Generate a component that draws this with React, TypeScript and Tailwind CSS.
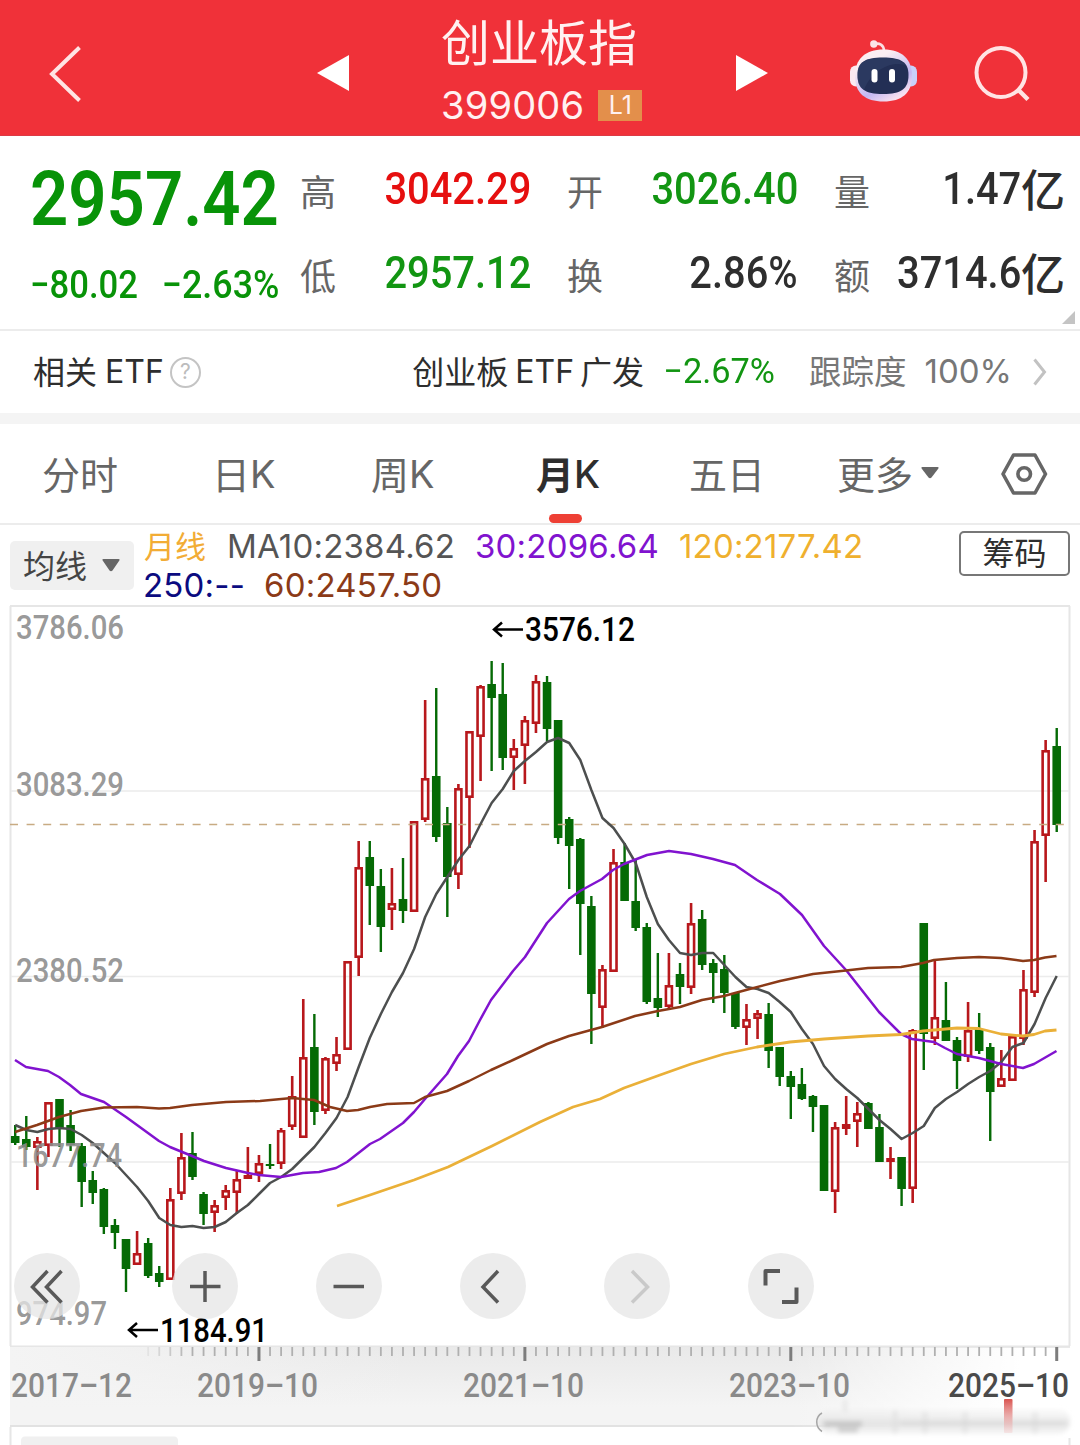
import type { ReactNode } from "react";

type Candle = [high: number, top: number, bottom: number, low: number, up: 0 | 1];

const RED = "#b8181c";
const GREEN = "#056a05";

const STEP = 11.08;
const X0 = 15.2;
const xAt = (i: number) => X0 + i * STEP;

/* Monthly candles, 2017-12 to 2025-10, in chart units */
const CANDLES: Candle[] = [
  [1125, 1136, 1143, 1145, 0], [1116, 1139, 1147, 1150, 0], [1137, 1141, 1148, 1190, 1], [1102, 1102, 1146, 1157, 1],
  [1099, 1099, 1129, 1147, 0], [1110, 1125, 1145, 1151, 0], [1143, 1146, 1182, 1207, 0], [1171, 1180, 1193, 1204, 0],
  [1188, 1189, 1227, 1234, 0], [1219, 1225, 1233, 1249, 0], [1239, 1239, 1269, 1292, 0], [1231, 1253, 1265, 1265, 1],
  [1238, 1243, 1276, 1278, 0], [1266, 1273, 1282, 1287, 0], [1188, 1199, 1280, 1280, 1], [1133, 1157, 1194, 1200, 1],
  [1132, 1153, 1177, 1180, 0], [1192, 1194, 1214, 1225, 0], [1200, 1205, 1213, 1232, 1], [1185, 1190, 1198, 1210, 1],
  [1171, 1179, 1193, 1214, 1], [1147, 1175, 1179, 1179, 1], [1155, 1163, 1174, 1182, 1], [1144, 1164, 1166, 1169, 0],
  [1128, 1130, 1164, 1169, 1], [1076, 1096, 1127, 1130, 1], [999, 1057, 1138, 1138, 1], [1014, 1047, 1112, 1125, 0],
  [1057, 1058, 1111, 1114, 1], [1037, 1054, 1064, 1071, 1], [961, 961, 1050, 1050, 1], [841, 867, 958, 976, 1],
  [841, 857, 886, 925, 0], [869, 886, 927, 952, 0], [868, 903, 910, 930, 1], [858, 899, 911, 923, 0],
  [821, 821, 912, 912, 1], [700, 778, 820, 822, 1], [688, 776, 837, 842, 0], [807, 823, 877, 917, 0],
  [784, 788, 875, 889, 1], [731, 731, 798, 848, 1], [685, 686, 737, 781, 1], [661, 684, 698, 771, 0],
  [663, 694, 758, 770, 0], [739, 748, 758, 790, 1], [716, 720, 746, 784, 1], [675, 681, 724, 733, 1],
  [676, 682, 729, 741, 0], [720, 720, 838, 844, 0], [817, 819, 846, 889, 0], [838, 839, 904, 955, 0],
  [896, 906, 994, 1044, 0], [965, 969, 1008, 1028, 1], [849, 862, 972, 972, 1], [843, 862, 901, 901, 0],
  [860, 901, 928, 931, 0], [923, 927, 1002, 1004, 0], [953, 998, 1008, 1017, 0], [953, 985, 1007, 1009, 1],
  [963, 974, 987, 1004, 0], [903, 923, 988, 994, 1], [910, 919, 965, 970, 0], [959, 963, 973, 1003, 0],
  [955, 969, 993, 1013, 0], [993, 993, 1027, 1029, 0], [1004, 1019, 1028, 1045, 1], [1010, 1013, 1019, 1039, 1],
  [1003, 1014, 1051, 1068, 0], [1047, 1047, 1077, 1086, 0], [1071, 1076, 1087, 1119, 0], [1068, 1084, 1099, 1100, 0],
  [1095, 1096, 1107, 1132, 0], [1105, 1105, 1191, 1191, 0], [1122, 1127, 1192, 1213, 1], [1096, 1124, 1129, 1135, 1],
  [1102, 1113, 1122, 1147, 1], [1102, 1103, 1129, 1129, 0], [1114, 1127, 1162, 1162, 0], [1147, 1158, 1162, 1179, 1],
  [1157, 1157, 1189, 1206, 0], [1029, 1030, 1189, 1203, 1], [923, 923, 1034, 1070, 0], [959, 1017, 1039, 1045, 1],
  [982, 1020, 1041, 1041, 0], [1037, 1040, 1061, 1089, 0], [1002, 1030, 1057, 1062, 1], [1013, 1029, 1051, 1054, 0],
  [1043, 1047, 1092, 1141, 0], [1050, 1078, 1087, 1087, 1], [1036, 1036, 1081, 1081, 1], [970, 989, 1039, 1045, 1],
  [830, 841, 993, 997, 1], [740, 750, 836, 882, 1], [728, 746, 825, 832, 0],
];

const MA10 = [
  1125, 1130, 1132, 1129, 1128, 1129, 1135, 1143, 1153, 1163, 1175, 1187, 1201, 1218, 1225, 1227, 1226, 1228, 1227,
  1222, 1213, 1205, 1194, 1183, 1177, 1169, 1158, 1147, 1133, 1118, 1097, 1067, 1038, 1014, 992, 973, 949, 917, 894,
  877, 860, 846, 824, 803, 789, 771, 761, 752, 742, 738, 743, 760, 790, 818, 828, 844, 863, 897, 924, 940, 953, 955,
  953, 953, 965, 977, 987, 989, 993, 1002, 1012, 1029, 1044, 1066, 1079, 1089, 1098, 1109, 1120, 1129, 1139, 1133,
  1126, 1108, 1099, 1092, 1084, 1077, 1071, 1062, 1047, 1043, 1024, 998, 976,
];

const MA30 =
  "15,1060 26,1067 48,1071 59,1077 70,1085 81,1094 104,1102 126,1117 148,1133 159,1141 170,1147 192,1156 204,1161 226,1168 248,1173 259,1175 281,1177 303,1173 319,1172 336,1168 347,1162 370,1144 380,1139 403,1123 414,1112 425,1099 447,1074 458,1056 469,1041 480,1020 491,1000 513,971 525,957 536,940 547,923 558,911 569,899 580,891 602,879 613,870 624,864 647,855 669,851 691,854 713,859 735,865 757,880 780,894 802,915 824,946 846,970 857,984 868,998 879,1012 901,1034 912,1039 934,1042 945,1048 957,1054 979,1058 1001,1064 1023,1068 1034,1064 1056.5,1051";
const MA60 =
  "15,1132 37,1125 59,1117 81,1111 104,1107.5 137,1107 159,1108.5 170,1108 192,1105 226,1102 260,1101 292,1098 314,1100 330,1107 347,1111 358,1110 370,1107 387,1104 414,1103 425,1097 447,1091 469,1081 491,1070 513,1060 547,1044 569,1036 580,1033 602,1027 635,1016 658,1011 680,1007 702,1000 724,996 746,990 780,981 813,974 846,970.5 868,968 901,967 923,963 934,960 957,958 979,957 1001,958 1023,961 1034,960 1045,957.5 1056.5,956";
const MA120 =
  "337,1206 370,1195 414,1180 448,1167 492,1146 540,1122 573,1107 600,1099 624,1088 660,1075 691,1064 724,1054 757,1047 790,1042 824,1039 868,1036 901,1034.5 923,1031 957,1028 979,1028.5 1001,1034 1023,1036 1034,1034.5 1045,1031 1056.5,1030";

const Y_LABELS = [
  { text: "3786.06", y: 638.5, w: 108 },
  { text: "3083.29", y: 795.5, w: 108 },
  { text: "2380.52", y: 981.5, w: 108 },
  { text: "1677.74", y: 1166.5, w: 106 },
  { text: "974.97", y: 1324.5, w: 91 },
];

const X_LABELS = [
  { text: "2017–12", x: 11, fill: "#8a8a8a" },
  { text: "2019–10", x: 197, fill: "#8a8a8a" },
  { text: "2021–10", x: 463, fill: "#8a8a8a" },
  { text: "2023–10", x: 729, fill: "#8a8a8a" },
  { text: "2025–10", x: 948, fill: "#4a4a4a" },
];

const QUOTES = [
  [
    { label: "高", value: "3042.29", color: "text-[#e60f0f]" },
    { label: "低", value: "2957.12", color: "text-[#129512]" },
  ],
  [
    { label: "开", value: "3026.40", color: "text-[#129512]" },
    { label: "换", value: "2.86%", color: "text-[#2e2e2e]" },
  ],
  [
    { label: "量", value: "1.47", unit: "亿", color: "text-[#2e2e2e]" },
    { label: "额", value: "3714.6", unit: "亿", color: "text-[#2e2e2e]" },
  ],
];

function Robot() {
  return (
    <svg width="70" height="66" viewBox="848 40 70 66" fill="none">
      <defs>
        <linearGradient id="shell" x1="0" y1="0" x2="0.6" y2="1">
          <stop offset="0.3" stopColor="#fbeef3" />
          <stop offset="0.75" stopColor="#c3b7f2" />
          <stop offset="1" stopColor="#f6dff0" />
        </linearGradient>
      </defs>
      <path d="M874 45.500C879 43 884 46 884 52" stroke="#fbdfe3" strokeWidth="2.600" />
      <circle cx="873.800" cy="45" r="3.700" fill="#fbe3e7" />
      <rect x="850" y="66.500" width="12" height="21" rx="6" fill="#fbe9f0" />
      <rect x="905" y="66.500" width="12" height="21" rx="6" fill="#c9d0fa" />
      <path d="M883.500 50.500C902 50.500 912 60 912 77C912 94 902 102.500 883.500 102.500C865 102.500 855 94 855 77C855 60 865 50.500 883.500 50.500Z" fill="url(#shell)" />
      <path d="M883 58.500C901 58.500 908.500 63 908.500 76C908.500 90 901 95 883 95C865 95 857.500 90 857.500 76C857.500 63 865 58.500 883 58.500Z" fill="#232f55" />
      <path d="M883 59C896 59 903 61.500 906 67C898 62 874 66 864 91C859 88 857.500 83 857.500 76C857.500 63 865 59 883 59Z" fill="#33436c" opacity="0.5" />
      <rect x="871.500" y="70" width="6" height="13.500" rx="3" fill="#fff" />
      <rect x="889" y="70" width="6" height="13.500" rx="3" fill="#fff" />
    </svg>
  );
}

function Header() {
  return (
    <header className="flex h-[136px] shrink-0 items-center border-b border-[#dc3a45] bg-[#f03139] pt-3 text-[#fff1f1]">
      <svg className="ml-[49px]" width="33" height="56" viewBox="0 0 33 56" fill="none" stroke="#ffe4e4" strokeWidth="4">
        <path d="M30.500 1.500L3 28L30.500 54.500" />
      </svg>
      <svg className="-mt-px ml-[235px]" width="32" height="36" viewBox="0 0 32 36">
        <path d="M32 0V36L0 18Z" fill="#fff" />
      </svg>
      <div className="-mt-2 ml-[80px] flex w-[220px] flex-col items-start pl-3">
        <h1 className="text-[49px] leading-[56px] whitespace-nowrap">创业板指</h1>
        <div className="mt-[15px] flex items-center gap-3.5">
          <span className="font-[Inter] text-[38px] leading-[44px] tracking-[0.2px]">399006</span>
          <span className="mt-px flex h-[31px] w-[44px] items-center justify-center bg-[#e38f4b] font-[Inter] text-[25px] leading-none">
            L1
          </span>
        </div>
      </div>
      <svg className="-mt-px ml-[87px]" width="32" height="36" viewBox="0 0 32 36">
        <path d="M0 0V36L32 18Z" fill="#fff" />
      </svg>
      <div className="-mt-1 ml-[80px]">
        <Robot />
      </div>
      <svg className="ml-[55px]" width="60" height="60" viewBox="0 0 60 60" fill="none" stroke="#ffe4e4" strokeWidth="4">
        <circle cx="28" cy="28.500" r="24.500" />
        <path d="M45 45.500L55 55.500" strokeWidth="4.500" />
      </svg>
    </header>
  );
}

function Quote() {
  return (
    <section className="relative flex h-[195px] shrink-0 border-b-2 border-[#ececec] pl-[30px]">
      <div className="w-[249px] font-[Roboto] font-medium whitespace-nowrap text-[#089308]">
        <div className="mt-[23px] w-fit origin-left scale-x-[0.882] text-[76px] leading-[80px] font-semibold">2957.42</div>
        <div className="mt-[22px] flex justify-between text-[38.5px] leading-[48px]">
          <span className="origin-left scale-x-[0.9]">−80.02</span>
          <span className="origin-right scale-x-[0.93]">−2.63%</span>
        </div>
      </div>
      <div className="ml-[21px] flex gap-[36px]">
        {QUOTES.map((col, i) => (
          <div key={i} className="w-[231px] pt-[24px]">
            {col.map((q) => (
              <div key={q.label} className="flex h-[60px] items-center justify-between whitespace-nowrap not-first:mt-[24px]">
                <span className="text-[36px] text-[#666]">{q.label}</span>
                <span className={`flex items-center pb-0.5 text-[44px] leading-none font-medium ${q.color}`}>
                  <span className="origin-right scale-x-[0.905] font-[Roboto]">{q.value}</span>
                  {q.unit && <span className="pb-0.5">{q.unit}</span>}
                </span>
              </div>
            ))}
          </div>
        ))}
      </div>
      <span className="absolute right-[5px] bottom-[5px] size-[13px] bg-[#c4c4c4] [clip-path:polygon(100%_0,100%_100%,0_100%)]" />
    </section>
  );
}

function EtfRow() {
  return (
    <section className="flex h-[82px] shrink-0 items-center pr-[33px] pl-[33px] text-[32px] whitespace-nowrap text-[#2e2e2e]">
      <span className="pb-1">相关</span>
      <span className="ml-2 font-[Inter]">ETF</span>
      <span className="ml-1.5 flex size-[31px] items-center justify-center rounded-full border-2 border-[#c4c4c4] font-[Inter] text-[21px] text-[#bcbcbc]">
        ?
      </span>
      <span className="ml-auto pb-1">创业板</span>
      <span className="ml-[7px] font-[Inter]">ETF</span>
      <span className="ml-1.5 pb-1">广发</span>
      <span className="ml-[17px] origin-right scale-x-[0.98] font-[Roboto] text-[35px] text-[#129512]">−2.67%</span>
      <span className="ml-[34px] pb-1 text-[32.5px] text-[#777]">跟踪度</span>
      <span className="ml-[18px] font-[Inter] text-[33px] text-[#777]">100%</span>
      <svg className="ml-[21px]" width="14" height="28" viewBox="0 0 14 28" fill="none" stroke="#c2c2c2" strokeWidth="3">
        <path d="M1.500 1.500L11.500 14L1.500 26.500" />
      </svg>
    </section>
  );
}

function Tab({ active, className, children }: { active?: boolean; className: string; children: ReactNode }) {
  return (
    <span className={`relative flex h-full items-center pb-0.5 text-[38px] ${active ? "font-bold text-[#2e2e2e]" : "text-[#666]"} ${className}`}>
      {children}
      {active && <span className="absolute bottom-0 left-[13px] h-[9px] w-[33px] rounded-full bg-[#ee4035]" />}
    </span>
  );
}

const K = ({ className = "" }: { className?: string }) => <span className={`pt-1 font-[Inter] ${className}`}>K</span>;

function Tabs() {
  return (
    <nav className="flex h-[101px] shrink-0 items-center border-b-2 border-[#ececec] whitespace-nowrap">
      <Tab className="ml-[42px] w-[170px]">分时</Tab>
      <Tab className="w-[159px]">日<K /></Tab>
      <Tab className="w-[165px]">周<K /></Tab>
      <Tab active className="w-[153px]">月<K className="font-medium" /></Tab>
      <Tab className="w-[148px]">五日</Tab>
      <Tab className="w-[162px]">
        更多
        <svg className="ml-2" width="18" height="12" viewBox="0 0 18 12">
          <path d="M1.500 0H16.500Q18.500 0 17 2L10.500 10.500Q9 12 7.500 10.500L1 2Q-0.500 0 1.500 0Z" fill="#666" />
        </svg>
      </Tab>
      <svg width="50" height="46" viewBox="0 0 50 46" fill="none" stroke="#666" strokeWidth="3.600" strokeLinejoin="round">
        <path d="M14.500 4H36L46.500 23L36 42H14.500L4 23Z" />
        <circle cx="25.200" cy="23" r="6.300" />
      </svg>
    </nav>
  );
}

function Legend() {
  return (
    <div className="flex h-[80px] shrink-0 items-start pr-[10px] pl-[10px] whitespace-nowrap">
      <div className="mt-[16px] flex h-[49px] w-[124px] items-center rounded-[5px] bg-[#f0f0f0] pl-[13px] text-[32px] text-[#444]">
        <span className="pb-1">均线</span>
        <svg className="ml-[15px]" width="18" height="13" viewBox="0 0 18 13">
          <path d="M1.500 0H16.500Q18.500 0 17 2L10.500 11.500Q9 13 7.500 11.500L1 2Q-0.500 0 1.500 0Z" fill="#666" />
        </svg>
      </div>
      <div className="ml-[9px] font-[Inter] text-[33px] leading-[39px] tracking-[0.2px]">
        <div className="flex pt-[2px]">
          <span className="-mt-0.5 ml-px font-['Noto_Sans_CJK_SC'] text-[31px] tracking-normal text-[#f2ac35]">月线</span>
          <span className="ml-[21px] text-[#555]">MA10:2384.62</span>
          <span className="ml-[20px] text-[#8113cf]">30:2096.64</span>
          <span className="ml-[20px] text-[#efb02e]">120:2177.42</span>
        </div>
        <div className="flex">
          <span className="text-[#0b0b80]">250:--</span>
          <span className="ml-[19px] text-[#8b3a17]">60:2457.50</span>
        </div>
      </div>
      <button className="mt-[6px] ml-auto flex h-[45px] w-[111px] items-center justify-center rounded-[5px] border-2 border-[#777] pb-1.5 text-[32px] leading-none text-[#2e2e2e]">
        筹码
      </button>
    </div>
  );
}

function RoundButton({ className = "", children }: { className?: string; children: ReactNode }) {
  return (
    <button className={`size-[66px] rounded-full bg-[#e6e6e6]/75 ${className}`}>
      <svg width="66" height="66" viewBox="0 0 66 66" fill="none" stroke="#595959" strokeWidth="3.500">
        {children}
      </svg>
    </button>
  );
}

function Chart() {
  return (
    <section className="relative h-[840px] shrink-0">
      <svg className="block font-[Roboto]" width="1080" height="840" viewBox="0 605 1080 840">
        <defs>
          <linearGradient id="axisBg" x1="0" y1="0" x2="0" y2="1">
            <stop offset="0" stopColor="#e9e9e9" />
            <stop offset="1" stopColor="#f4f4f4" />
          </linearGradient>
          <linearGradient id="fadeLeft">
            <stop offset="0" stopColor="#f4f4f4" />
            <stop offset="1" stopColor="#f4f4f4" stopOpacity="0" />
          </linearGradient>
          <linearGradient id="fadeRight">
            <stop offset="0" stopColor="#fff" stopOpacity="0" />
            <stop offset="1" stopColor="#fff" />
          </linearGradient>
          <linearGradient id="pill" x1="0" y1="0" x2="0" y2="1">
            <stop offset="0" stopColor="#ededed" stopOpacity="0.3" />
            <stop offset="0.6" stopColor="#dcdcdc" />
            <stop offset="1" stopColor="#f4f4f4" />
          </linearGradient>
          <linearGradient id="redBar" x1="0" y1="0" x2="0" y2="1">
            <stop offset="0" stopColor="#d9534f" />
            <stop offset="1" stopColor="#f3c9c9" stopOpacity="0.4" />
          </linearGradient>
          <filter id="soft" x="-20%" y="-50%" width="140%" height="200%">
            <feGaussianBlur stdDeviation="2" />
          </filter>
        </defs>

        {/* plot frame and grid */}
        <g stroke="#e6e6e6" strokeWidth="2">
          <path d="M10 606H1070M10.500 606V1346M1069.500 606V1346M10 1346.500H1070" />
          <path d="M11 791H1069M11 976.500H1069M11 1162H1069" stroke="#ececec" strokeWidth="1.500" />
        </g>

        {CANDLES.map(([high, top, bottom, low, up], i) => {
          const x = xAt(i);
          const h = Math.max(bottom - top - 2.6, 1);
          return up ? (
            <g key={i} stroke={RED} strokeWidth="2.600" fill="none">
              <path d={`M${x} ${high}V${top + 1}M${x} ${bottom - 1}V${low}`} />
              <rect x={x - 3} y={top + 1.3} width={6} height={h} />
            </g>
          ) : (
            <g key={i} fill={GREEN}>
              <rect x={x - 1.2} y={high} width={2.4} height={low - high} />
              <rect x={x - 4.3} y={top} width={8.6} height={bottom - top} />
            </g>
          );
        })}

        <path d="M10 824.500H1066" stroke="#c8ab83" strokeWidth="1.500" strokeDasharray="8 8.600" />

        <g fill="none" strokeWidth="2.500" strokeLinejoin="round">
          <polyline points={MA10.map((y, i) => `${xAt(i)},${y}`).join(" ")} stroke="#4d4f4f" />
          <polyline points={MA30} stroke="#8113cf" />
          <polyline points={MA120} stroke="#eab038" strokeWidth="2.800" />
          <polyline points={MA60} stroke="#8b3a17" />
        </g>

        <g fill="#8c8c8c" fillOpacity="0.9" fontSize="33" fontWeight="500">
          {Y_LABELS.map((l) => (
            <text key={l.text} x="16" y={l.y} textLength={l.w} lengthAdjust="spacingAndGlyphs">
              {l.text}
            </text>
          ))}
        </g>

        <g fill="#000" fontSize="33" fontWeight="500">
          <path d="M523 629.500H494M502 622.500L494 629.500L502 636.500" stroke="#000" strokeWidth="2.500" fill="none" />
          <text x="525" y="641" textLength="110" lengthAdjust="spacingAndGlyphs">3576.12</text>
          <path d="M158 1330H129M137 1323L129 1330L137 1337" stroke="#000" strokeWidth="2.500" fill="none" />
          <text x="160" y="1342" textLength="108" lengthAdjust="spacingAndGlyphs">1184.91</text>
        </g>

        {/* time axis */}
        <rect x="10" y="1347" width="1060" height="80" fill="#f4f4f4" />
        <rect x="10" y="1347" width="1060" height="60" fill="url(#axisBg)" />
        <rect x="10" y="1347" width="400" height="79" fill="url(#fadeLeft)" />
        <path d="M10 1426H830" stroke="#e2e2e2" strokeWidth="2" />
        <rect x="790" y="1348" width="230" height="80" fill="url(#fadeRight)" />
        <rect x="1019" y="1348" width="52" height="80" fill="#fff" />
        {CANDLES.map((_, i) => {
          if (i < 12) return null;
          const major = (i - 22) % 24 === 0;
          return (
            <path
              key={i}
              d={`M${xAt(i)} 1347V${major ? 1361 : 1356}`}
              stroke={major ? "#7d7d7d" : "#b0b0b0"}
              strokeWidth={major ? 3 : 1.8}
              opacity={i < 16 ? (i - 11) / 5 : 1}
            />
          );
        })}

        {/* range pill */}
        <g filter="url(#soft)">
          <rect x="818" y="1409" width="252" height="25" rx="12" fill="url(#pill)" opacity="0.75" />
          <path d="M824 1424H862" stroke="#b5b5b5" strokeWidth="6" opacity="0.6" />
          <path d="M838 1430H858" stroke="#b5b5b5" strokeWidth="6" opacity="0.5" />
          <path d="M845 1400V1412M895 1410V1434M925 1412V1434M965 1412V1434M1035 1412V1434" stroke="#dcdcdc" strokeWidth="5" opacity="0.5" />
          <path d="M900 1423H1066" stroke="#c9c9c9" strokeWidth="4" opacity="0.35" />
        </g>
        <path d="M822 1413C815 1417 815 1427 822 1431.500" stroke="#a5a5a5" strokeWidth="1.500" fill="none" />
        <rect x="1004" y="1399" width="8.500" height="34" rx="1" fill="url(#redBar)" />

        <g fontSize="32.500" fontWeight="500">
          {X_LABELS.map((l) => (
            <text key={l.text} x={l.x} y="1396.500" fill={l.fill} textLength="121" lengthAdjust="spacingAndGlyphs">
              {l.text}
            </text>
          ))}
        </g>

        {/* next panel peeking in */}
        <path d="M10.500 1427V1445M1069.500 1438V1445" stroke="#e6e6e6" strokeWidth="2" />
        <path d="M21 1445V1441Q21 1436.500 25 1436.500H174Q178 1436.500 178 1441V1445Z" fill="#f0f0f0" />
      </svg>

      <div className="absolute top-[648px] left-[14px] flex gap-[78px]">
        <RoundButton>
          <path d="M33.500 18L18.500 34L33.500 49.500M47.500 18L32.500 34L47.500 49.500" />
        </RoundButton>
        <RoundButton className="ml-[14px]">
          <path d="M18 33.500H48.500M33 18V49" />
        </RoundButton>
        <RoundButton>
          <path d="M17.500 33.500H48" />
        </RoundButton>
        <RoundButton>
          <path d="M38 18L23 34L38 49.500" />
        </RoundButton>
        <RoundButton>
          <path d="M28 18L43.500 34L28 49.500" stroke="#c9c9c9" />
        </RoundButton>
        <RoundButton>
          <path d="M17.500 32.500V18H32M34 49H48.500V34.500" strokeWidth="4" strokeLinejoin="round" />
        </RoundButton>
      </div>
    </section>
  );
}

export default function App() {
  return (
    <div className="flex h-[1445px] w-[1080px] flex-col overflow-hidden bg-white font-['Noto_Sans_CJK_SC',sans-serif]">
      <Header />
      <Quote />
      <EtfRow />
      <div className="h-[11px] shrink-0 bg-[#f4f4f4]" />
      <Tabs />
      <Legend />
      <Chart />
    </div>
  );
}
